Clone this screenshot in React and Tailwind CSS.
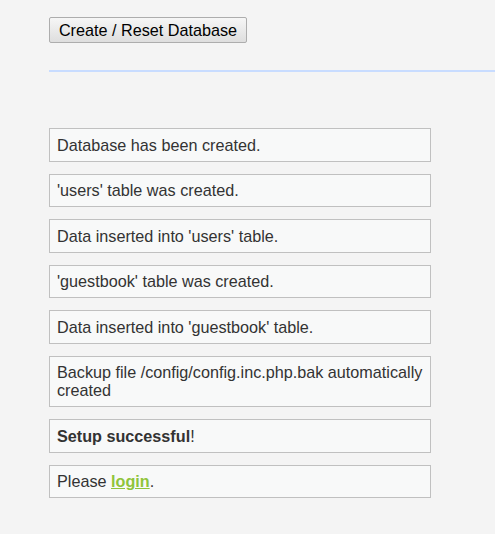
import React from 'react'

const messages = [
  "Database has been created.",
  "'users' table was created.",
  "Data inserted into 'users' table.",
  "'guestbook' table was created.",
  "Data inserted into 'guestbook' table.",
  "Backup file /config/config.inc.php.bak automatically created",
]

function Message({ children }) {
  return (
    <div className="w-[382px] border border-[#c0c0c0] bg-[#f8f9f9] pl-[7px] pr-[6px] pt-[6.75px] pb-[6.75px] text-[16.2px] leading-[18px] text-[#333333]">
      {children}
    </div>
  )
}

export default function App() {
  return (
    <div className="min-h-screen bg-[#f4f4f4] font-['Liberation_Sans',Arial,sans-serif]">
      <div className="pl-[49px] pt-[17px]">
        <button className="h-[26px] w-[198px] border border-[#adadad] bg-gradient-to-b from-[#f6f6f6] to-[#dedede] text-[16.2px] leading-[18px] text-black rounded-[2px]">
          Create / Reset Database
        </button>
        <div className="mt-[27px] h-[2px] bg-[#c8dcff]" />
        <div className="mt-[56px] flex flex-col gap-[12px] pb-[37px]">
          {messages.map((m) => (
            <Message key={m}>{m}</Message>
          ))}
          <Message>
            <span className="font-bold">Setup successful</span>!
          </Message>
          <Message>
            Please <a href="#" className="font-bold text-[#8fc43a] underline">login</a>.
          </Message>
        </div>
      </div>
    </div>
  )
}
